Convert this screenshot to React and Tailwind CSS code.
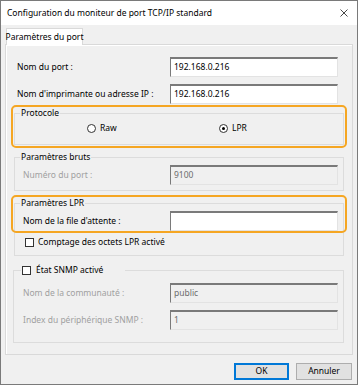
import React from 'react';

const font = { fontFamily: '"Noto Sans", "Open Sans", sans-serif' };

const Field = ({ value = '', disabled = false }) => (
  <div
    className={`w-[168px] h-[20px] flex items-center pl-[3px] text-[8.5px] border border-t-2 border-t-[#7a7a7a] border-l-[#7a7a7a] border-r-[#e3e3e3] border-b-[#e3e3e3] ${
      disabled ? 'bg-[#f0f0f0] text-[#6d6d6d]' : 'bg-white text-black'
    }`}
  >
    {value}
  </div>
);

const Row = ({ label, value, disabled, labelWidth, className = '' }) => (
  <div className={`flex items-center ${className}`}>
    <div className={`${labelWidth} whitespace-nowrap text-[8.5px] ${disabled ? 'text-[#a0a0a0]' : 'text-black'}`}>{label}</div>
    <Field value={value} disabled={disabled} />
  </div>
);

const Radio = ({ checked }) => (
  <span className="w-[9px] h-[9px] rounded-full border border-[#333] bg-white flex items-center justify-center">
    {checked && <span className="w-[3px] h-[3px] rounded-full bg-black" />}
  </span>
);

const Check = () => <span className="w-[9px] h-[9px] border border-[#333] bg-white inline-block" />;

export default function App() {
  return (
    <div className="relative w-[358px] h-[385px] border border-[#7a7a7a] bg-[#f0f0f0] flex flex-col" style={font}>
      {/* title bar */}
      <div className="h-[24px] bg-white flex items-center justify-between pl-[6px] pr-[8px] text-[8.5px] text-black">
        <span>Configuration du moniteur de port TCP/IP standard</span>
        <svg width="8" height="8" viewBox="0 0 8 8" className="mr-[1px]">
          <path d="M0.5 0.5 L7.5 7.5 M7.5 0.5 L0.5 7.5" stroke="#333" strokeWidth="0.9" />
        </svg>
      </div>

      {/* tabs */}
      <div className="pt-[3px] px-[4px]">
        <div className="relative z-10 ml-[1px] -mb-px w-[77px] h-[17px] bg-white border border-b-0 border-[#d9d9d9] flex items-center justify-center whitespace-nowrap text-[8.5px] text-black">
          Paramètres du port
        </div>
        <div className="h-[311px] border border-[#d9d9d9] shadow-[inset_1px_1px_0_#fff]">
          <Row className="mt-[12px] pl-[11px]" labelWidth="w-[153px]" label="Nom du port :" value="192.168.0.216" />
          <Row className="mt-[7px] pl-[11px]" labelWidth="w-[153px]" label="Nom d'imprimante ou adresse IP :" value="192.168.0.216" />

          <fieldset className="mt-[1px] ml-[8px] w-[330px] border border-[#dcdcdc] pb-[9px]">
            <legend className="ml-[5px] px-[1px] text-[8.5px] leading-[16px] text-black">Protocole</legend>
            <div className="flex items-center h-[14px] pl-[72px] text-[8.5px] text-black">
              <div className="w-[132px] flex items-center gap-[3px]">
                <Radio />
                <span className="ml-[1px]">Raw</span>
              </div>
              <div className="flex items-center gap-[4px]">
                <Radio checked />
                <span>LPR</span>
              </div>
            </div>
          </fieldset>

          <fieldset className="mt-[4px] ml-[8px] w-[330px] border border-[#dcdcdc] pb-[5px]">
            <legend className="ml-[5px] px-[1px] text-[8.5px] leading-[16px] text-black">Paramètres bruts</legend>
            <Row className="pl-[8px]" labelWidth="w-[147px]" label="Numéro du port :" value="9100" disabled />
          </fieldset>

          <fieldset className="mt-[4px] ml-[8px] w-[330px] border border-[#dcdcdc] pb-[6px]">
            <legend className="ml-[5px] px-[1px] text-[8.5px] leading-[16px] text-black">Paramètres LPR</legend>
            <Row className="pl-[8px]" labelWidth="w-[147px]" label="Nom de la file d'attente :" value="" />
            <div className="mt-[4px] h-[14px] pl-[10px] flex items-center gap-[4px] text-[8.5px] text-black">
              <Check />
              <span>Comptage des octets LPR activé</span>
            </div>
          </fieldset>

          <fieldset className="mt-[6px] ml-[7px] w-[331px] border border-[#dcdcdc] pb-[12px]">
            <legend className="ml-[7px] w-[104px] pl-[1px] text-[8.5px] leading-[16px] text-black">
              <span className="flex items-center gap-[5px]">
                <Check />
                <span>État SNMP activé</span>
              </span>
            </legend>
            <Row className="mt-[5px] pl-[9px]" labelWidth="w-[147px]" label="Nom de la communauté :" value="public" disabled />
            <Row className="mt-[7px] pl-[9px]" labelWidth="w-[147px]" label="Index du périphérique SNMP :" value="1" disabled />
          </fieldset>
        </div>
      </div>

      {/* buttons */}
      <div className="mt-[8px] pr-[5px] flex justify-end gap-[7px] text-[8.5px] text-black">
        <button className="w-[55px] h-[17px] border-2 border-[#0078d7] bg-[#e1e1e1] flex items-center justify-center">OK</button>
        <button className="w-[56px] h-[17px] border border-[#adadad] bg-[#e1e1e1] flex items-center justify-center">Annuler</button>
      </div>

      {/* highlight boxes */}
      <div className="absolute left-[10px] top-[104px] w-[336px] h-[43px] border-2 border-[#f5a623] rounded-[5px] pointer-events-none" />
      <div className="absolute left-[10px] top-[194px] w-[336px] h-[38px] border-2 border-[#f5a623] rounded-[5px] pointer-events-none" />
    </div>
  );
}
